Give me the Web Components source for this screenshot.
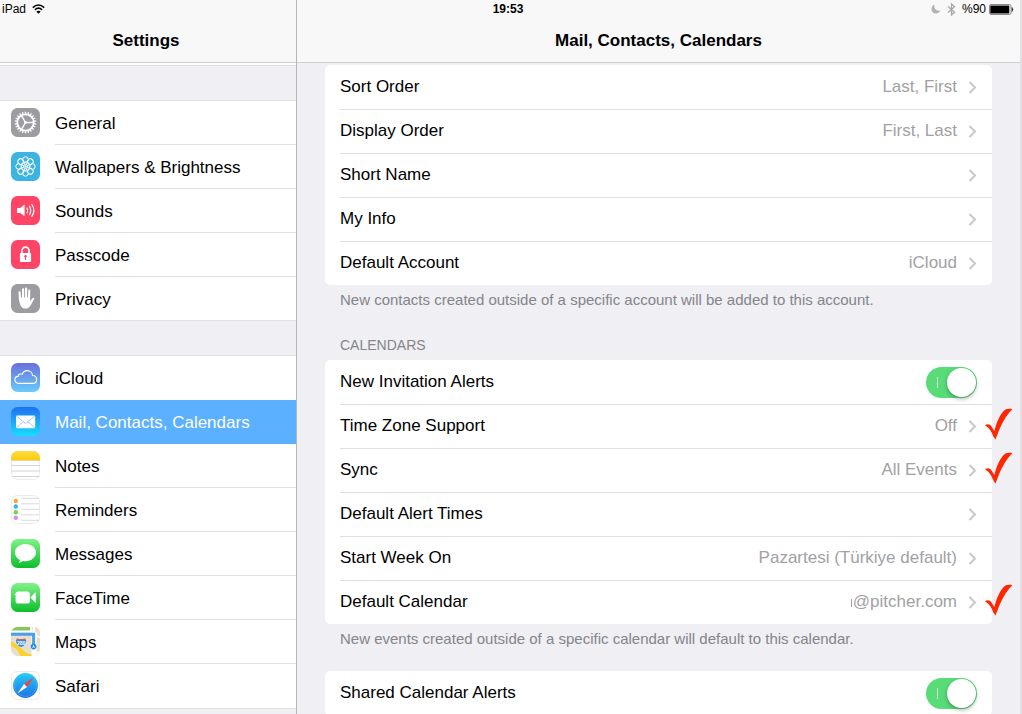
<!DOCTYPE html>
<html lang="en">
<head>
<meta charset="utf-8">
<meta name="viewport" content="width=device-width, initial-scale=1">
<title>Settings</title>
<style>
    html, body {
        height: 100%;
        margin: 0;
    }
    body {
        font-family: "Liberation Sans", Arial, sans-serif;
        font-size: 17px;
        line-height: 20px;
        color: #000;
        overflow: hidden;
        --bar: #f8f8f8;
        --ground: #efeff4;
        --line: #e0e0e3;
        --muted: #a1a1a5;
        --note: #85858a;
        --tint: #5bb0ff;
    }
</style>
</head>
<body>

<settings-app>
    <status-bar slot="status" device="iPad" time="19:53" battery="%90"></status-bar>

    <settings-pane slot="sidebar" heading="Settings">
        <nav-list>
            <nav-item icon="general">General</nav-item>
            <nav-item icon="wallpaper">Wallpapers &amp; Brightness</nav-item>
            <nav-item icon="sounds">Sounds</nav-item>
            <nav-item icon="passcode">Passcode</nav-item>
            <nav-item icon="privacy">Privacy</nav-item>
        </nav-list>
        <nav-list>
            <nav-item icon="icloud">iCloud</nav-item>
            <nav-item icon="mail" selected>Mail, Contacts, Calendars</nav-item>
            <nav-item icon="notes">Notes</nav-item>
            <nav-item icon="reminders">Reminders</nav-item>
            <nav-item icon="messages">Messages</nav-item>
            <nav-item icon="facetime">FaceTime</nav-item>
            <nav-item icon="maps">Maps</nav-item>
            <nav-item icon="safari">Safari</nav-item>
        </nav-list>
    </settings-pane>

    <settings-pane slot="detail" heading="Mail, Contacts, Calendars">
        <settings-card>
            <settings-row value="Last, First">Sort Order</settings-row>
            <settings-row value="First, Last">Display Order</settings-row>
            <settings-row>Short Name</settings-row>
            <settings-row>My Info</settings-row>
            <settings-row value="iCloud" last>Default Account</settings-row>
            <span slot="note">New contacts created outside of a specific account will be added to this account.</span>
        </settings-card>
        <settings-card>
            <span slot="title">CALENDARS</span>
            <toggle-row>New Invitation Alerts</toggle-row>
            <settings-row value="Off" marked>Time Zone Support</settings-row>
            <settings-row value="All Events" marked>Sync</settings-row>
            <settings-row>Default Alert Times</settings-row>
            <settings-row value="Pazartesi (Türkiye default)">Start Week On</settings-row>
            <settings-row value="@pitcher.com" clipped marked last>Default Calendar</settings-row>
            <span slot="note">New events created outside of a specific calendar will default to this calendar.</span>
        </settings-card>
        <settings-card>
            <toggle-row>Shared Calendar Alerts</toggle-row>
        </settings-card>
    </settings-pane>
</settings-app>

<script>
// repeats a shape around the middle of a 29x29 tile
const ring = (count, shape) => Array.from({length: count}, (_, i) =>
    `<g transform="rotate(${i * 360 / count} 14.5 14.5)">${shape}</g>`).join('');

const tile = (fill) => `<rect width="29" height="29" rx="6.5" fill="${fill}"/>`;

const gradient = (id, from, to) =>
    `<linearGradient id="${id}" x1="0" y1="0" x2="0" y2="1"><stop offset="0" stop-color="${from}"/><stop offset="1" stop-color="${to}"/></linearGradient>`;

const outline = '<rect x=".5" y=".5" width="28" height="28" rx="6" fill="none" stroke="#e6e6e8" stroke-width=".8"/>';

const ICONS = {
    general: `${tile('#9c9ca1')}
        <g fill="none" stroke="#fff">
            <circle cx="14.5" cy="14.5" r="8.2" stroke-width="1.8"/>
            ${ring(22, '<path d="M14.5 6.4V3.7" stroke-width="1.3"/>')}
            ${ring(3, '<path d="M14.5 14.5H22.5" stroke-width="1.4"/>')}
        </g>
        <circle cx="14.5" cy="14.5" r="1.4" fill="#fff"/>`,
    wallpaper: `${tile('#3cb4e2')}
        <g fill="none" stroke="#fff" stroke-width="1">
            ${ring(8, '<circle cx="14.5" cy="7.6" r="2.8"/>')}
            ${ring(8, '<circle cx="14.5" cy="11.4" r="1.5" stroke-width=".7"/>')}
        </g>
        <circle cx="14.5" cy="14.5" r="1.1" fill="#fff"/>`,
    sounds: `${tile('#fe4566')}
        <path d="M6 12h3.2L13.6 8.6v11.6L9.2 17H6z" fill="#fff"/>
        <g fill="none" stroke="#fff" stroke-width="1.2" stroke-linecap="round">
            <path d="M16 12.1Q17.5 14.4 16 16.8M18.4 10.3Q21.2 14.4 18.4 18.6M20.8 8.5Q24.9 14.4 20.8 20.4"/>
        </g>`,
    passcode: `${tile('#fe4566')}
        <path d="M10.9 14V11a3.6 3.9 0 0 1 7.2 0V14" fill="none" stroke="#fff" stroke-width="1.7"/>
        <rect x="8.9" y="13" width="11.2" height="9" rx=".8" fill="#fff"/>
        <path d="M14.5 20V17" stroke="#fe4566" stroke-width="1.1"/>
        <circle cx="14.5" cy="16.2" r="1.2" fill="#fe4566"/>`,
    privacy: `${tile('#9c9ca1')}
        <g stroke="#fff" stroke-width="2.1" stroke-linecap="round" fill="none">
            <path d="M9 15.5L8.6 8.2M12.1 14V5.3M15.1 14V4.6M18 14.5L18.3 6.6"/>
        </g>
        <path d="M8 13.5H19L19.3 17.2C20.5 15.2 21.5 14 23 13.8C23.6 14 23.4 14.6 23 15.2C21.5 17.8 20.2 21.2 18.2 23.2C16.6 24.8 12.4 25 10.6 22.9C8.6 20.5 8.1 17 8 13.5Z" fill="#fff"/>`,
    icloud: `<defs>${gradient('c', '#6b6fdc', '#66ccfb')}</defs>${tile('url(#c)')}
        <path d="M8 20.4C5.5 20.4 3.9 18.8 3.9 16.8C3.9 14.9 5.3 13.5 7.1 13.4C7 11.6 9.5 10.3 11.1 11.4C12 9 14 7.6 16.2 7.6C19.3 7.6 21.4 9.8 21.5 12.5C24 12.6 25.6 14.2 25.6 16.4C25.6 18.8 24 20.4 21.6 20.4Z" fill="none" stroke="#fff" stroke-width="1.1"/>`,
    mail: `<defs>${gradient('m', '#1f71f2', '#1adcfd')}</defs>${tile('url(#m)')}
        <rect x="5" y="8.4" width="19.2" height="12.8" rx="1" fill="#fff"/>
        <path d="M5.2 8.8L14.6 16.6L24 8.8M5.4 20.8L12.2 14.7M23.8 20.8L17 14.7" fill="none" stroke="#72b6f5" stroke-width=".9" stroke-dasharray="1.6 .4"/>`,
    notes: `<defs>${gradient('n', '#fddc45', '#fdcc0b')}<clipPath id="nc"><rect width="29" height="29" rx="6.5"/></clipPath></defs>
        ${tile('#fff')}${outline}
        <g clip-path="url(#nc)">
            <rect width="29" height="9" fill="url(#n)"/>
            <path d="M0 9.4H29" stroke="#e3c765" stroke-width=".8"/>
            <path d="M0 14.5H29M0 20H29M0 25.5H29" stroke="#cfcfd1" stroke-width=".9"/>
        </g>`,
    reminders: `${tile('#fff')}${outline}
        <path d="M10 3.3H28M10 8.8H28M10 14.3H28M10 19.8H28M10 25.3H28" stroke="#d2d2d4" stroke-width=".8"/>
        <circle cx="4.8" cy="6" r="2.2" fill="#fda32c"/>
        <circle cx="4.8" cy="11.5" r="2.2" fill="#36b2fa"/>
        <circle cx="4.8" cy="17.2" r="2.2" fill="#6dd84f"/>
        <circle cx="4.8" cy="22.8" r="2.2" fill="#d18df0"/>`,
    messages: `<defs>${gradient('g', '#80f388', '#0cbe2c')}</defs>${tile('url(#g)')}
        <path d="M14.5 5C20.4 5 25 8.8 25 13.6C25 18.4 20.4 22.2 14.5 22.2C13.5 22.2 12.6 22.1 11.7 21.9C10.6 22.9 9.4 23.7 7.4 23.8C8.4 22.9 8.9 21.8 8.8 20.9C5.8 19.4 4 16.7 4 13.6C4 8.8 8.6 5 14.5 5Z" fill="#fff"/>`,
    facetime: `<defs>${gradient('f', '#80f388', '#0cbe2c')}</defs>${tile('url(#f)')}
        <rect x="4.6" y="8.4" width="14.2" height="12.2" rx="2.6" fill="#fff"/>
        <path d="M3.6 11.4H6" stroke="#fff" stroke-width="1.2"/>
        <path d="M19.4 14.5L24.2 9.4Q24.8 9.2 24.8 10V19Q24.8 19.8 24.2 19.6Z" fill="#fff"/>`,
    maps: `<defs><clipPath id="mp"><rect width="29" height="29" rx="6.5"/></clipPath></defs>
        <g clip-path="url(#mp)">
            <rect width="29" height="29" fill="#e6dfcc"/>
            <path d="M0 0H20V4.2H0Z" fill="#82ca58"/>
            <path d="M24 0H29V5Z" fill="#f6bccb"/>
            <path d="M0 4.4H24M23 0V29M20 0V6" stroke="#fff" stroke-width="2" fill="none"/>
            <path d="M23 5V29" stroke="#fff" stroke-width="5"/>
            <path d="M0 14.2C5 17 8 18.3 11.4 22.4C13.6 25.2 16 26.5 20.4 27.6V29H9.5C8 25 5 20.5 0 19.2Z" fill="#fdd023"/>
            <path d="M0 7.2H22.6V18" stroke="#489fee" stroke-width="3" fill="none"/>
            <path d="M25 8.5L29 10.5M25 27L29 24" stroke="#fff" stroke-width="1.5"/>
        </g>
        <path d="M4.6 13.2Q5.7 12.2 5.6 11Q10 12.4 14.4 11Q14.4 12.2 15.6 13.2C15.4 17 14 19.2 10.1 20.4C6.2 19.2 4.8 17 4.6 13.2Z" fill="#3889cf" stroke="#fff" stroke-width=".6"/>
        <path d="M5.4 13.2Q5.9 12.3 5.9 11.6Q10 12.8 14.2 11.6Q14.3 12.4 14.9 13.2Z" fill="#e45b55"/>
        <text x="10.1" y="17.6" text-anchor="middle" font-size="5" font-weight="bold" fill="#fff">280</text>
        <circle cx="22.6" cy="19.6" r="2.8" fill="#1c86ec"/>
        <path d="M22.6 17.5L24 21L22.6 20.3L21.2 21Z" fill="#fff"/>`,
    safari: `<defs>${gradient('s', '#22ccf7', '#1f71e6')}</defs>${tile('#fff')}${outline}
        <circle cx="14.5" cy="14.5" r="12.4" fill="url(#s)"/>
        <circle cx="14.5" cy="14.5" r="10.8" fill="none" stroke="#6cc0f6" stroke-width=".9" stroke-dasharray=".5 .7"/>
        <path d="M22.6 6.6L13.1 13L16 15.9Z" fill="#fb3f38"/>
        <path d="M6.4 22.4L13.1 13L16 15.9Z" fill="#fff"/>`
};

const CHECK = `
    <svg class="mark" width="28" height="32" viewBox="0 0 28 32" aria-hidden="true">
        <path d="M0 17.6C2 15.6 5 16 6.5 18.4C7.8 20.4 8.6 21.8 9.4 23C11 16 14 8 18.2 3.4C20.4 1 24 .4 27.4 1.2C20 8 15.5 18 10.5 31.6C7.4 28 6 20 0 17.6Z" fill="#ff2600"/>
    </svg>`;

class SettingsApp extends HTMLElement {

    constructor() {
        super();
        this.attachShadow({mode: 'open'}).innerHTML =
        `
        <style>
            :host {
                display: grid;
                grid-template-columns: 297px minmax(0, 1fr);
                grid-template-rows: 18px minmax(0, 1fr);
                box-sizing: border-box;
                height: 100vh;
                border-right: 2px solid #e2e2e5;
                background: var(--ground);
            }
            /* the status bar shares the first row with both pane headers */
            .status {
                grid-area: 1 / 1 / 2 / 3;
                z-index: 1;
            }
            .sidebar {
                grid-area: 1 / 1 / 3 / 2;
                border-right: 1px solid #b4b4b9;
                min-height: 0;
            }
            .detail {
                grid-area: 1 / 2 / 3 / 3;
                min-height: 0;
            }
        </style>
        <div class="status"><slot name="status"></slot></div>
        <nav class="sidebar"><slot name="sidebar"></slot></nav>
        <main class="detail"><slot name="detail"></slot></main>
        `;
    }
}

class StatusBar extends HTMLElement {

    constructor() {
        super();
        this.attachShadow({mode: 'open'}).innerHTML =
        `
        <style>
            :host {
                display: grid;
                grid-template-columns: 1fr auto 1fr;
                align-items: center;
                height: 18px;
                padding: 0 6px 0 2px;
                font-size: 12px;
                line-height: 18px;
            }
            div {
                display: flex;
                align-items: center;
                gap: 6px;
            }
            .right {
                justify-content: flex-end;
            }
            .power {
                gap: 3px;
            }
            svg {
                display: block;
            }
            time {
                font-weight: bold;
            }
        </style>
        <div>
            <span>${this.getAttribute('device')}</span>
            <svg width="13" height="10" viewBox="0 0 13 10" fill="none" stroke="#000" stroke-width="1.6">
                <path d="M.8 3.6Q6.5 -1.6 12.2 3.6M2.9 5.8Q6.5 2.6 10.1 5.8"/>
                <path d="M6.5 9.8L4.3 7.6Q6.5 5.9 8.7 7.6Z" fill="#000" stroke="none"/>
            </svg>
        </div>
        <time>${this.getAttribute('time')}</time>
        <div class="right">
            <svg width="10" height="10" viewBox="0 0 10 10"><path d="M3.4 .4C2.6 4 5 7.2 9.4 6.6C8.4 8.7 6.5 9.7 4.6 9.5C2.2 9.3 .4 7.3 .5 4.9C.6 2.9 1.7 1.2 3.4 .4Z" fill="#b2b2b4"/></svg>
            <svg width="9" height="13" viewBox="0 0 9 13" fill="none" stroke="#a8a8aa" stroke-width="1.3"><path d="M1 3.6L7.5 9.3L4.5 12V1L7.5 3.7L1 9.4"/></svg>
            <div class="power">
                <span>${this.getAttribute('battery')}</span>
                <svg width="25" height="11" viewBox="0 0 25 11">
                    <rect x=".5" y=".5" width="21.5" height="10" rx="1.5" fill="#fff" stroke="#8b8b8d"/>
                    <rect x="1.3" y="1.5" width="19" height="8" fill="#000"/>
                    <path d="M23 3.5Q25 5.5 23 7.5Z" fill="#333" stroke="#333" stroke-width=".6"/>
                </svg>
            </div>
        </div>
        `;
    }
}

class SettingsPane extends HTMLElement {

    constructor() {
        super();
        this.attachShadow({mode: 'open'}).innerHTML =
        `
        <style>
            :host {
                display: flex;
                flex-direction: column;
                height: 100%;
                overflow: hidden;
            }
            header {
                flex: none;
                box-sizing: border-box;
                height: 63px;
                padding: 19px 4px 0 0;
                border-bottom: 1px solid #cfcfd2;
                background: var(--bar);
                text-align: center;
            }
            h1 {
                margin: 0;
                font-size: 17px;
                font-weight: bold;
                line-height: 43px;
            }
            .content {
                flex: 1;
                min-height: 0;
                overflow: hidden;
            }
            :host([slot="sidebar"]) .content {
                border-top: 2px solid #fff;
            }
            :host([slot="detail"]) .content {
                padding: 2px 28px 0;
            }
            :host([slot="detail"]) header {
                padding-right: 0;
            }
        </style>
        <header><h1>${this.getAttribute('heading')}</h1></header>
        <div class="content"><slot></slot></div>
        `;
    }
}

class NavList extends HTMLElement {

    constructor() {
        super();
        this.attachShadow({mode: 'open'}).innerHTML =
        `
        <style>
            :host {
                display: block;
            }
            .gap {
                box-sizing: border-box;
                height: 36px;
                border: 1px solid var(--line);
                border-width: 1px 0;
            }
            /* neighbouring groups share a hairline */
            :host(:not(:first-of-type)) {
                margin-top: -1px;
            }
            :host(:last-of-type)::after {
                content: "";
                display: block;
                border-top: 1px solid var(--line);
            }
            .items {
                background: #fff;
            }
        </style>
        <div class="gap"></div>
        <div class="items"><slot></slot></div>
        `;
    }
}

class NavItem extends HTMLElement {

    constructor() {
        super();
        this.attachShadow({mode: 'open'}).innerHTML =
        `
        <style>
            :host {
                display: block;
            }
            a {
                display: flex;
                gap: 15px;
                height: 44px;
                padding-left: 11px;
                color: inherit;
                text-decoration: none;
            }
            svg {
                flex: none;
                width: 29px;
                height: 29px;
                margin-top: 7px;
            }
            span {
                flex: 1;
                line-height: 46px;
                box-sizing: border-box;
                height: 44px;
                border-bottom: 1px solid var(--line);
                white-space: nowrap;
            }
            :host(:last-of-type) span,
            :host([icon="icloud"]) span {
                border-color: transparent;
            }
            :host([selected]) a {
                background: var(--tint);
                color: #fff;
            }
            :host([selected]) span {
                border-color: transparent;
            }
        </style>
        <a href="#${this.getAttribute('icon')}">
            <svg viewBox="0 0 29 29" aria-hidden="true">${ICONS[this.getAttribute('icon')]}</svg>
            <span><slot></slot></span>
        </a>
        `;
    }
}

class SettingsCard extends HTMLElement {

    constructor() {
        super();
        this.attachShadow({mode: 'open'}).innerHTML =
        `
        <style>
            :host {
                display: block;
            }
            .rows {
                border-radius: 5px;
                background: #fff;
            }
            ::slotted([slot]) {
                display: block;
                padding: 0 15px;
                line-height: 16px;
                color: var(--note);
            }
            ::slotted([slot="title"]) {
                padding-top: 5px;
                padding-bottom: 7px;
                font-size: 14px;
            }
            ::slotted([slot="note"]) {
                padding-top: 7px;
                padding-bottom: 24px;
                font-size: 15px;
            }
        </style>
        <slot name="title"></slot>
        <div class="rows"><slot></slot></div>
        <slot name="note"></slot>
        `;
    }
}

class SettingsRow extends HTMLElement {

    constructor() {
        super();
        const value = this.getAttribute('value') || '';
        this.attachShadow({mode: 'open'}).innerHTML =
        `
        <style>
            :host {
                display: block;
                position: relative;
            }
            button {
                display: flex;
                align-items: center;
                width: 100%;
                height: 44px;
                margin: 0;
                padding: 0 15px 0 0;
                border: none;
                background: none;
                font: inherit;
                color: inherit;
                text-align: left;
                cursor: pointer;
            }
            .label {
                flex: 1;
                padding-left: 15px;
            }
            .value {
                margin-right: 11px;
                color: var(--muted);
            }
            :host([clipped]) .value::before {
                content: "";
                display: inline-block;
                width: 1px;
                height: 8px;
                margin-right: 1px;
                background: var(--muted);
            }
            .line {
                height: 1px;
                margin: 0 0 -1px 15px;
                background: var(--line);
            }
            :host([last]) .line {
                display: none;
            }
            .mark {
                position: absolute;
                top: 4px;
                right: -21px;
            }
        </style>
        <button type="button">
            <span class="label"><slot></slot></span>
            <span class="value">${value}</span>
            <svg width="9" height="13" viewBox="0 0 9 13" fill="none" stroke="#c7c7cc" stroke-width="2"><path d="M1.5 1L7 6.5L1.5 12"/></svg>
        </button>
        <div class="line"></div>
        ${this.hasAttribute('marked') ? CHECK : ''}
        `;
    }
}

class ToggleRow extends HTMLElement {

    constructor() {
        super();
        this.attachShadow({mode: 'open'}).innerHTML =
        `
        <style>
            :host {
                display: block;
            }
            .row {
                display: flex;
                align-items: center;
                justify-content: space-between;
                height: 44px;
                padding: 0 15px;
            }
            input {
                appearance: none;
                display: flex;
                align-items: center;
                justify-content: space-between;
                box-sizing: border-box;
                width: 51px;
                height: 31px;
                margin: 0;
                padding: 0 1px 0 11px;
                border-radius: 16px;
                background: #59db78;
                cursor: pointer;
            }
            input::before {
                content: "";
                width: 1px;
                height: 11px;
                background: #d6f6dd;
            }
            input::after {
                content: "";
                width: 29px;
                height: 29px;
                border-radius: 50%;
                background: #fff;
                box-shadow: 0 2px 4px rgba(0, 0, 0, .3);
            }
            input:not(:checked) {
                flex-direction: row-reverse;
                background: #e5e5ea;
            }
            .line {
                height: 1px;
                margin: 0 0 -1px 15px;
                background: var(--line);
            }
        </style>
        <div class="row">
            <label for="toggle"><slot></slot></label>
            <input id="toggle" type="checkbox" role="switch" checked>
        </div>
        <div class="line"></div>
        `;
    }
}

customElements.define('settings-app', SettingsApp);
customElements.define('status-bar', StatusBar);
customElements.define('settings-pane', SettingsPane);
customElements.define('nav-list', NavList);
customElements.define('nav-item', NavItem);
customElements.define('settings-card', SettingsCard);
customElements.define('settings-row', SettingsRow);
customElements.define('toggle-row', ToggleRow);
</script>
</body>
</html>
